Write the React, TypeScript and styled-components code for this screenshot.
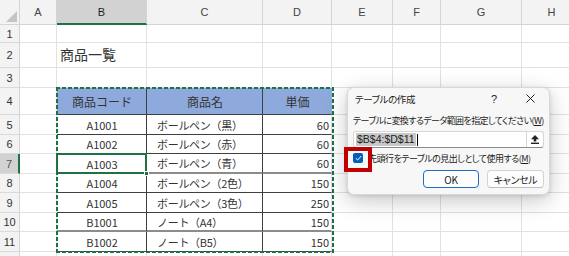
import React from 'react';
import styled, { createGlobalStyle, css } from 'styled-components';

const GlobalStyle = createGlobalStyle`
  html, body {
    margin: 0;
    padding: 0;
    background: #ffffff;
  }
  body {
    font-family: "Noto Sans CJK JP", "Liberation Sans", sans-serif;
  }
`;

const COLS = [20, 37, 90, 116, 69, 61, 48, 81, 60];
const ROWS = [25, 18, 25, 20, 27, 20, 19, 20, 19, 20, 19, 20, 20];
const LETTERS = ['A', 'B', 'C', 'D', 'E', 'F', 'G', 'H'];

const GRID = '#e1e1e1';
const DARK = '#3f3f3f';
const GREEN = '#1e7145';

type Pos = { $row: number; $col: number };

// グリッド上の位置
const placed = css<Pos>`
  grid-row: ${p => p.$row};
  grid-column: ${p => p.$col};
`;

// シート全体
const Sheet = styled.div`
  position: relative;
  width: 569px;
  height: 256px;
  overflow: hidden;
  background: #fff;
`;

const Grid = styled.div`
  display: grid;
  grid-template-columns: ${COLS.map(c => `${c}px`).join(' ')};
  grid-template-rows: ${ROWS.map(r => `${r}px`).join(' ')};
`;

const Corner = styled.div`
  grid-row: 1;
  grid-column: 1;
  background: #f3f3f3;
  border-right: 1px solid #d4d4d4;
  border-bottom: 1px solid #d4d4d4;
  box-sizing: border-box;
  display: flex;
  align-items: flex-end;
  justify-content: flex-end;
  padding: 0 2px 2px 0;
`;

const ColHeader = styled.div<Pos & { $active?: boolean }>`
  ${placed};
  box-sizing: border-box;
  background: ${p => (p.$active ? '#d2d2d2' : '#f3f3f3')};
  border-right: 1px solid #d4d4d4;
  border-bottom: ${p => (p.$active ? `2px solid ${GREEN}` : '1px solid #d4d4d4')};
  display: flex;
  align-items: center;
  justify-content: center;
  font-family: "Liberation Sans", sans-serif;
  font-size: 11px;
  color: ${p => (p.$active ? '#1f1f1f' : '#444')};
`;

const RowHeader = styled.div<Pos & { $active?: boolean }>`
  ${placed};
  box-sizing: border-box;
  background: ${p => (p.$active ? '#d2d2d2' : '#f3f3f3')};
  border-right: ${p => (p.$active ? `2px solid ${GREEN}` : '1px solid #d4d4d4')};
  border-bottom: 1px solid #dadada;
  display: flex;
  align-items: center;
  justify-content: center;
  font-family: "Liberation Sans", sans-serif;
  font-size: 11px;
  color: ${p => (p.$active ? '#555' : '#333')};
`;

type Align = 'left' | 'center' | 'right';

const Cell = styled.div<
  Pos & {
    $bg?: string;
    $align?: Align;
    $right?: string;
    $bottom?: string;
    $bottomW?: number;
    $size?: number;
    $indent?: number;
    $selected?: boolean;
    $valign?: 'center' | 'end';
  }
>`
  ${placed};
  position: relative;
  box-sizing: border-box;
  background: ${p => p.$bg || '#fff'};
  border-right: 1px solid ${p => p.$right || GRID};
  border-bottom: ${p => p.$bottomW || 1}px solid ${p => p.$bottom || GRID};
  display: flex;
  align-items: ${p => (p.$valign === 'end' ? 'flex-end' : 'center')};
  justify-content: ${p => (p.$align === 'right' ? 'flex-end' : p.$align === 'center' ? 'center' : 'flex-start')};
  padding: 0 2px 0 ${p => p.$indent ?? 3}px;
  font-size: ${p => p.$size || 12}px;
  color: #333;
  white-space: nowrap;
  z-index: 1;

  ${p =>
    p.$selected &&
    css`
      z-index: 3;
      &::after {
        content: '';
        position: absolute;
        left: -1px;
        top: -1px;
        right: -1px;
        bottom: -1px;
        border: 2px solid ${GREEN};
        pointer-events: none;
      }
      &::before {
        content: '';
        position: absolute;
        right: -3px;
        bottom: -3px;
        width: 5px;
        height: 5px;
        background: ${GREEN};
        border: 1px solid #fff;
        box-sizing: border-box;
        z-index: 4;
      }
    `}
`;

const Title = styled.span`
  font-size: 14px;
  color: #333;
  padding-bottom: 3px;
`;

const ItemName = styled.span`
  letter-spacing: -0.3px;
`;

// コピー範囲の点線（マーチングアンツ）
const CopyMarquee = styled.div`
  grid-column: 3 / 6;
  grid-row: 5 / 13;
  margin: -1px -2px -1px -1px;
  z-index: 2;
  pointer-events: none;
  background:
    repeating-linear-gradient(90deg, ${GREEN} 0 4px, transparent 4px 6px) top left / 100% 2px no-repeat,
    repeating-linear-gradient(90deg, ${GREEN} 0 4px, transparent 4px 6px) bottom left / 100% 2px no-repeat,
    repeating-linear-gradient(180deg, ${GREEN} 0 4px, transparent 4px 6px) top left / 2px 100% no-repeat,
    repeating-linear-gradient(180deg, ${GREEN} 0 4px, transparent 4px 6px) top right / 2px 100% no-repeat;
`;

// ダイアログ
const Dialog = styled.div`
  position: absolute;
  left: 347px;
  top: 87px;
  width: 203px;
  height: 108px;
  box-sizing: border-box;
  background: #f7f7f7;
  border: 1px solid #d8d8d8;
  border-radius: 7px;
  box-shadow: 0 6px 22px rgba(0, 0, 0, 0.22), 0 1px 4px rgba(0, 0, 0, 0.12);
  display: flex;
  flex-direction: column;
  z-index: 10;
  font-feature-settings: "palt";
  font-size: 9.5px;
  letter-spacing: -0.4px;
  color: #1b1b1b;
`;

const TitleBar = styled.div`
  height: 23px;
  display: flex;
  align-items: center;
  padding: 0 8px 0 7px;
`;

const TitleText = styled.span`
  flex: 1;
`;

const TitleButton = styled.span`
  width: 22px;
  display: flex;
  justify-content: center;
  align-items: center;
  font-family: "Liberation Sans", sans-serif;
  font-size: 11px;
  letter-spacing: 0;
  color: #222;
  & + & {
    margin-left: 14px;
  }
`;

const Body = styled.div`
  flex: 1;
  display: flex;
  flex-direction: column;
  padding: 0 5px 6px 5px;
`;

const Label = styled.div`
  margin-top: 5px;
  height: 14px;
  line-height: 14px;
  font-size: 9px;
  letter-spacing: -0.6px;
  white-space: nowrap;
`;

const Key = styled.span`
  text-decoration: underline;
  text-underline-offset: 1px;
`;

const InputRow = styled.div`
  margin-top: 3px;
  height: 17px;
  display: flex;
  box-sizing: border-box;
  background: #fff;
  border: 1px solid #d6d6d6;
  border-bottom-color: #8a8a8a;
  border-radius: 3px;
`;

const InputText = styled.div`
  flex: 1;
  display: flex;
  align-items: center;
  padding-left: 2px;
  font-family: "Liberation Sans", sans-serif;
  font-size: 10.5px;
  letter-spacing: 0;
  color: #222;
`;

const Highlight = styled.span`
  background: #c8c8c8;
  padding: 0 1px;
  line-height: 13px;
`;

const Caret = styled.span`
  width: 1px;
  height: 12px;
  background: #000;
  margin-left: 1px;
`;

const PickButton = styled.div`
  width: 16px;
  border-left: 1px solid #d6d6d6;
  display: flex;
  align-items: center;
  justify-content: center;
`;

const CheckRow = styled.div`
  margin-top: 1px;
  height: 18px;
  display: flex;
  align-items: center;
  gap: 5px;
  font-size: 9px;
  letter-spacing: -0.5px;
  white-space: nowrap;
`;

const CheckWrap = styled.div`
  position: relative;
  width: 10px;
  height: 10px;
  flex: none;
`;

const CheckBox = styled.div`
  width: 10px;
  height: 10px;
  border-radius: 2px;
  background: #005fb8;
  display: flex;
  align-items: center;
  justify-content: center;
`;

// 赤い注目枠（注釈）
const RedFrame = styled.div`
  position: absolute;
  left: -9px;
  top: -6px;
  width: 28px;
  height: 25px;
  box-sizing: border-box;
  border: 4px solid #c00000;
  z-index: 5;
`;

const ButtonRow = styled.div`
  margin-top: 3px;
  display: flex;
  justify-content: flex-end;
  gap: 8px;
`;

const Button = styled.button<{ $primary?: boolean; $w: number }>`
  width: ${p => p.$w}px;
  height: 18px;
  box-sizing: border-box;
  padding: 0;
  background: #fdfdfd;
  border: 1px solid ${p => (p.$primary ? '#1f6fc1' : '#d3d3d3')};
  border-bottom-color: ${p => (p.$primary ? '#1f6fc1' : '#bdbdbd')};
  border-radius: 4px;
  font-family: "Noto Sans CJK JP", "Liberation Sans", sans-serif;
  font-feature-settings: "palt";
  font-size: 10px;
  letter-spacing: -0.3px;
  color: #1b1b1b;
`;

const items: [string, string, number][] = [
  ['A1001', 'ボールペン（黒）', 60],
  ['A1002', 'ボールペン（赤）', 60],
  ['A1003', 'ボールペン（青）', 60],
  ['A1004', 'ボールペン（2色）', 150],
  ['A1005', 'ボールペン（3色）', 250],
  ['B1001', 'ノート（A4）', 150],
  ['B1002', 'ノート（B5）', 150],
];

// 表の下罫線（行ごと）
const rowBottom = (i: number) => {
  if (i === 2 || i === 5) return { color: '#8c8c8c', w: 2 };
  return { color: DARK, w: 1 };
};

const App: React.FC = () => {
  const cells: React.ReactNode[] = [];

  LETTERS.forEach((l, i) =>
    cells.push(
      <ColHeader key={`h-${l}`} $row={1} $col={i + 2} $active={l === 'B'}>
        {l}
      </ColHeader>
    )
  );

  for (let r = 1; r <= 12; r++) {
    const gr = r + 1;
    // 12行目は画面下端でほぼ見えないので番号は出さない
    cells.push(
      <RowHeader key={`r-${r}`} $row={gr} $col={1} $active={r === 7}>
        {r <= 11 ? r : null}
      </RowHeader>
    );
    for (let c = 0; c < 8; c++) {
      const key = `c-${r}-${c}`;
      const gc = c + 2;
      const inTable = c >= 1 && c <= 3;
      if (r === 2 && c === 1) {
        cells.push(
          <Cell key={key} $row={gr} $col={gc} $valign="end">
            <Title>商品一覧</Title>
          </Cell>
        );
      } else if (r === 4 && inTable) {
        const text = ['商品コード', '商品名', '単価'][c - 1];
        cells.push(
          <Cell
            key={key}
            $row={gr}
            $col={gc}
            $bg="#8ea9db"
            $align="center"
            $right={c < 3 ? DARK : '#8ea9db'}
            $bottom={DARK}
          >
            {text}
          </Cell>
        );
      } else if (r >= 5 && r <= 11 && inTable) {
        const i = r - 5;
        const [code, name, price] = items[i];
        const b = rowBottom(i);
        const selected = r === 7 && c === 1;
        const plain = r === 11 || selected;
        cells.push(
          <Cell
            key={key}
            $row={gr}
            $col={gc}
            $align={c === 1 ? 'center' : c === 2 ? 'left' : 'right'}
            $right={c < 3 ? DARK : GRID}
            $bottom={plain ? DARK : b.color}
            $bottomW={plain ? 1 : b.w}
            $size={11}
            $indent={c === 2 ? 10 : 3}
            $selected={selected}
          >
            {c === 1 ? code : c === 2 ? <ItemName>{name}</ItemName> : price}
          </Cell>
        );
      } else {
        cells.push(<Cell key={key} $row={gr} $col={gc} />);
      }
    }
  }

  return (
    <>
      <GlobalStyle />
      <Sheet>
        <Grid>
          <Corner>
            <svg width="11" height="11" viewBox="0 0 11 11">
              <polygon points="11,0 11,11 0,11" fill="#c4c4c4" />
            </svg>
          </Corner>
          {cells}
          <CopyMarquee />
        </Grid>

        <Dialog>
          <TitleBar>
            <TitleText>テーブルの作成</TitleText>
            <TitleButton>?</TitleButton>
            <TitleButton>
              <svg width="9" height="9" viewBox="0 0 9 9">
                <path d="M0.5 0.5 L8.5 8.5 M8.5 0.5 L0.5 8.5" stroke="#222" strokeWidth="1" />
              </svg>
            </TitleButton>
          </TitleBar>
          <Body>
            <Label>
              テーブルに変換するデータ範囲を指定してください(<Key>W</Key>)
            </Label>
            <InputRow>
              <InputText>
                <Highlight>$B$4:$D$11</Highlight>
                <Caret />
              </InputText>
              <PickButton>
                <svg width="8" height="9" viewBox="0 0 8 9">
                  <path d="M4 0 L8 4.2 L5.3 4.2 L5.3 6.6 L2.7 6.6 L2.7 4.2 L0 4.2 Z" fill="#222" />
                  <rect x="0" y="7.6" width="8" height="1.4" fill="#222" />
                </svg>
              </PickButton>
            </InputRow>
            <CheckRow>
              <CheckWrap>
                <CheckBox>
                  <svg width="7" height="6" viewBox="0 0 7 6">
                    <path d="M0.8 3.2 L2.7 5 L6.2 1" stroke="#fff" strokeWidth="1" fill="none" />
                  </svg>
                </CheckBox>
                <RedFrame />
              </CheckWrap>
              <span>
                先頭行をテーブルの見出しとして使用する(<Key>M</Key>)
              </span>
            </CheckRow>
            <ButtonRow>
              <Button $primary $w={56}>OK</Button>
              <Button $w={57}>キャンセル</Button>
            </ButtonRow>
          </Body>
        </Dialog>
      </Sheet>
    </>
  );
};

export default App;
